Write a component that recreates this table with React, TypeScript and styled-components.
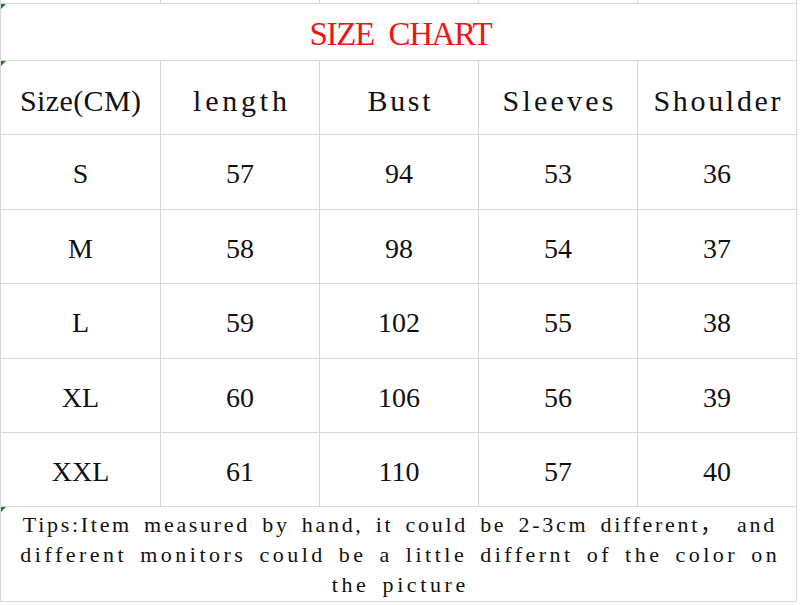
import styled, {createGlobalStyle, css} from "styled-components";

const GlobalStyle = createGlobalStyle`
  html, body {
    margin: 0;
    padding: 0;
    background: #ffffff;
  }
`

const COLUMNS = '160px 159px 159px 159px 159px'
const LINE = '#d6d6de'

const headers: Array<[string, number]> = [
  ['Size(CM)', 0.4],
  ['length', 3.8],
  ['Bust', 2.7],
  ['Sleeves', 3.2],
  ['Shoulder', 2.7],
]

const rows: Array<[string, number, number, number, number]> = [
  ['S', 57, 94, 53, 36],
  ['M', 58, 98, 54, 37],
  ['L', 59, 102, 55, 38],
  ['XL', 60, 106, 56, 39],
  ['XXL', 61, 110, 57, 40],
]

const rowHeights = [75, 74, 75, 74, 74]

const tips: Array<[string, number]> = [
  ['Tips:Item measured by hand, it could be 2-3cm different， and', 2.7],
  ['different monitors could be a little differnt of the color on', 3.5],
  ['the picture', 3.6],
]

const App = () => {
  return (
    <>
      <GlobalStyle/>
      <Sheet>
        <Row $height={4} $cols={COLUMNS}>
          {headers.map(([h]) => <Cell key={h}/>)}
        </Row>

        <Row $height={57} $cols="1fr">
          <Cell $marker>
            <Title>SIZE CHART</Title>
          </Cell>
        </Row>

        <Row $height={74} $cols={COLUMNS}>
          {headers.map(([h, spacing], i) => (
            <Cell key={h} $marker={i === 0}>
              <HeadText $spacing={spacing}>{h}</HeadText>
            </Cell>
          ))}
        </Row>

        {rows.map((r, i) => (
          <Row key={r[0]} $height={rowHeights[i]} $cols={COLUMNS}>
            {r.map((v, j) => (
              <Cell key={j}>
                <Value>{v}</Value>
              </Cell>
            ))}
          </Row>
        ))}

        <Row $height={95} $cols="1fr">
          <Cell $marker>
            <Tips>
              {tips.map(([t, spacing]) => (
                <TipLine key={t} $spacing={spacing}>{t}</TipLine>
              ))}
            </Tips>
          </Cell>
        </Row>
      </Sheet>
    </>
  )
}

export default App

const Sheet = styled.div`
  width: 796px;
  display: flex;
  flex-direction: column;
  border-left: 1px solid ${LINE};
  background: #fff;
`

const Row = styled.div<{ $height: number; $cols: string }>`
  display: grid;
  grid-template-columns: ${({$cols}) => $cols};
  height: ${({$height}) => `${$height}px`};
  box-sizing: border-box;
  border-bottom: 1px solid ${LINE};
`

const Cell = styled.div<{ $marker?: boolean }>`
  position: relative;
  display: flex;
  align-items: center;
  justify-content: center;
  border-right: 1px solid ${LINE};
  overflow: hidden;

  ${({$marker}) => $marker && css`
    &::before {
      content: '';
      position: absolute;
      top: 0;
      left: 0;
      border-top: 5px solid #1f7a1f;
      border-right: 5px solid transparent;
    }
  `}
`

const Title = styled.div`
  font-family: "Liberation Serif", serif;
  font-size: 33px;
  letter-spacing: -1.4px;
  word-spacing: 8px;
  color: #f01414;
  padding-top: 5px;
  padding-left: 4px;
  white-space: pre;
`

const HeadText = styled.div<{ $spacing: number }>`
  font-family: "Liberation Serif", serif;
  font-size: 30px;
  letter-spacing: ${({$spacing}) => `${$spacing}px`};
  margin-right: ${({$spacing}) => `-${$spacing}px`};
  color: #111;
  padding-top: 6px;
  white-space: pre;
`

const Value = styled.div`
  font-family: "Liberation Serif", serif;
  font-size: 28px;
  color: #111;
  padding-top: 4px;
`

const Tips = styled.div`
  display: flex;
  flex-direction: column;
  align-items: center;
  padding-top: 2px;
`

const TipLine = styled.div<{ $spacing: number }>`
  font-family: "Liberation Serif", "Noto Sans CJK SC", serif;
  font-size: 22px;
  letter-spacing: ${({$spacing}) => `${$spacing}px`};
  margin-right: ${({$spacing}) => `-${$spacing}px`};
  word-spacing: 4px;
  line-height: 30px;
  color: #111;
  white-space: pre;
`
